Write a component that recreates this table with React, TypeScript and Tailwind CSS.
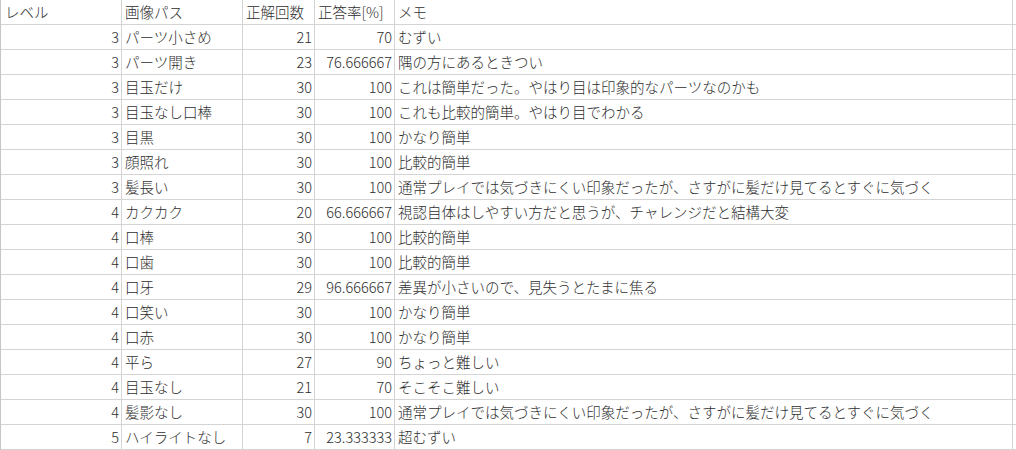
const rows: [string, string, string, string, string][] = [
  ["3", "パーツ小さめ", "21", "70", "むずい"],
  ["3", "パーツ開き", "23", "76.666667", "隅の方にあるときつい"],
  ["3", "目玉だけ", "30", "100", "これは簡単だった。やはり目は印象的なパーツなのかも"],
  ["3", "目玉なし口棒", "30", "100", "これも比較的簡単。やはり目でわかる"],
  ["3", "目黒", "30", "100", "かなり簡単"],
  ["3", "顔照れ", "30", "100", "比較的簡単"],
  ["3", "髪長い", "30", "100", "通常プレイでは気づきにくい印象だったが、さすがに髪だけ見てるとすぐに気づく"],
  ["4", "カクカク", "20", "66.666667", "視認自体はしやすい方だと思うが、チャレンジだと結構大変"],
  ["4", "口棒", "30", "100", "比較的簡単"],
  ["4", "口歯", "30", "100", "比較的簡単"],
  ["4", "口牙", "29", "96.666667", "差異が小さいので、見失うとたまに焦る"],
  ["4", "口笑い", "30", "100", "かなり簡単"],
  ["4", "口赤", "30", "100", "かなり簡単"],
  ["4", "平ら", "27", "90", "ちょっと難しい"],
  ["4", "目玉なし", "21", "70", "そこそこ難しい"],
  ["4", "髪影なし", "30", "100", "通常プレイでは気づきにくい印象だったが、さすがに髪だけ見てるとすぐに気づく"],
  ["5", "ハイライトなし", "7", "23.333333", "超むずい"],
];

function Row({ cells, header }: { cells: string[]; header?: boolean }) {
  const cell = "h-full flex items-center border-r border-[#d4d4d4] whitespace-nowrap overflow-hidden";
  return (
    <div className="flex h-[25px] border-b border-[#d4d4d4]">
      <div className={`${cell} w-[121px] ${header ? "justify-start pl-[4px]" : "justify-end pr-[2px]"}`}>
        {cells[0]}
      </div>
      <div className={`${cell} w-[121px] pl-[3px]`}>{cells[1]}</div>
      <div className={`${cell} w-[72px] ${header ? "pl-[3px]" : "justify-end pr-[2px]"}`}>{cells[2]}</div>
      <div className={`${cell} w-[80px] ${header ? "pl-[3px]" : "justify-end pr-[2px]"}`}>{cells[3]}</div>
      <div className={`${cell} w-[618px] pl-[3px]`}>{cells[4]}</div>
    </div>
  );
}

export default function App() {
  return (
    <div
      className="w-[1016px] h-[450px] overflow-hidden bg-white text-[#2e2e2e] text-[14.5px] font-light leading-none border-l border-[#c6c6c6]"
      style={{ fontFamily: '"Noto Sans CJK JP", "Noto Sans", sans-serif' }}
    >
      <Row header cells={["レベル", "画像パス", "正解回数", "正答率[%]", "メモ"]} />
      {rows.map((r, i) => (
        <Row key={i} cells={r} />
      ))}
    </div>
  );
}
